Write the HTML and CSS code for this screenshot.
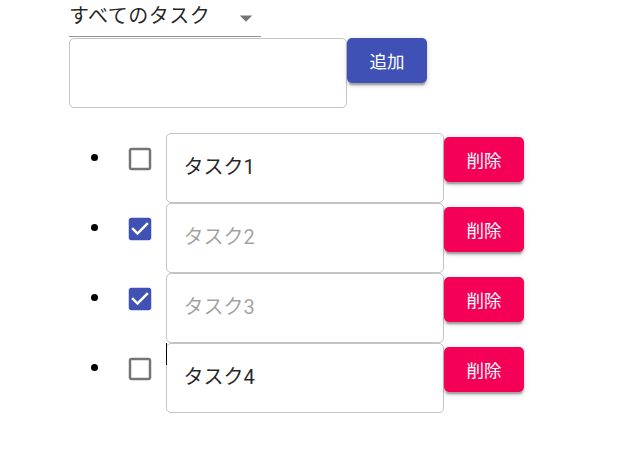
FILE: index.html
```html
<!DOCTYPE html>
<html lang="ja">
<head>
<meta charset="utf-8">
<link rel="stylesheet" href="styles.css">
</head>
<body>
<div class="app">
  <div class="select">
    <span class="select-text">すべてのタスク</span>
    <svg class="select-icon" viewBox="0 0 24 24" width="30" height="30"><path d="M7 10l5 5 5-5z"/></svg>
  </div>
  <div class="add-row">
    <div class="field add-field"></div>
    <button class="btn btn-primary">追加</button>
  </div>
  <ul class="list">
    <li class="item">
      <span class="bullet"></span>
      <span class="check"><svg viewBox="0 0 24 24" width="30" height="30"><path class="off" d="M19 5v14H5V5h14m0-2H5c-1.1 0-2 .9-2 2v14c0 1.1.9 2 2 2h14c1.1 0 2-.9 2-2V5c0-1.1-.9-2-2-2z"/></svg></span>
      <div class="field task"><span class="task-text">タスク1</span></div>
      <button class="btn btn-danger">削除</button>
    </li>
    <li class="item">
      <span class="bullet"></span>
      <span class="check"><svg viewBox="0 0 24 24" width="30" height="30"><rect x="5" y="5" width="14" height="14" fill="#fff"/><path class="on" d="M19 3H5c-1.11 0-2 .9-2 2v14c0 1.1.89 2 2 2h14c1.11 0 2-.9 2-2V5c0-1.1-.89-2-2-2zm-9 14l-5-5 1.41-1.41L10 14.17l7.590-7.59L19 8l-9 9z"/></svg></span>
      <div class="field task"><span class="task-text done">タスク2</span></div>
      <button class="btn btn-danger">削除</button>
    </li>
    <li class="item">
      <span class="bullet"></span>
      <span class="check"><svg viewBox="0 0 24 24" width="30" height="30"><rect x="5" y="5" width="14" height="14" fill="#fff"/><path class="on" d="M19 3H5c-1.11 0-2 .9-2 2v14c0 1.1.89 2 2 2h14c1.11 0 2-.9 2-2V5c0-1.1-.89-2-2-2zm-9 14l-5-5 1.41-1.41L10 14.17l7.590-7.59L19 8l-9 9z"/></svg></span>
      <div class="field task"><span class="task-text done">タスク3</span></div>
      <button class="btn btn-danger">削除</button>
    </li>
    <li class="item">
      <span class="bullet"></span>
      <span class="check"><svg viewBox="0 0 24 24" width="30" height="30"><path class="off" d="M19 5v14H5V5h14m0-2H5c-1.1 0-2 .9-2 2v14c0 1.1.9 2 2 2h14c1.1 0 2-.9 2-2V5c0-1.1-.9-2-2-2z"/></svg></span>
      <div class="field task"><span class="caret"></span><span class="task-text">タスク4</span></div>
      <button class="btn btn-danger">削除</button>
    </li>
  </ul>
</div>
</body>
</html>
```
FILE: styles.css
```css
html, body {
  margin: 0;
  padding: 0;
  background: #fff;
}
body {
  font-family: Roboto, "Noto Sans CJK JP", sans-serif;
  color: rgba(0, 0, 0, 0.87);
}
.app {
  padding-left: 69px;
}
.select {
  position: relative;
  width: 192px;
  height: 37px;
  border-bottom: 1.25px solid rgba(0, 0, 0, 0.42);
  box-sizing: border-box;
  padding-top: 5px;
}
.select-text {
  display: block;
  font-size: 20px;
  line-height: 23px;
  letter-spacing: 0.5px;
}
.select-icon {
  position: absolute;
  right: 0;
  top: 3px;
  fill: rgba(0, 0, 0, 0.54);
}
.add-row {
  display: flex;
  align-items: flex-start;
  margin-top: 1px;
}
.field {
  position: relative;
  width: 278px;
  height: 70px;
  box-sizing: border-box;
  border: 1.25px solid rgba(0, 0, 0, 0.23);
  border-radius: 5px;
  display: flex;
  align-items: center;
  padding-left: 16.5px;
}
.btn {
  width: 80px;
  height: 45px;
  border: none;
  border-radius: 5px;
  color: #fff;
  font-family: Roboto, "Noto Sans CJK JP", sans-serif;
  font-size: 17.5px;
  padding: 0;
  box-shadow: 0 3.75px 1.25px -2.5px rgba(0, 0, 0, 0.2), 0 2.5px 2.5px 0 rgba(0, 0, 0, 0.14), 0 1.25px 6.25px 0 rgba(0, 0, 0, 0.12);
}
.btn-primary {
  background: #3f51b5;
}
.btn-danger {
  background: #f50057;
  margin-top: 4px;
}
.list {
  list-style: none;
  margin: 25px 0 0;
  padding: 0;
}
.item {
  display: flex;
  align-items: flex-start;
  height: 70px;
}
.bullet {
  width: 7px;
  height: 7px;
  border-radius: 50%;
  background: #000;
  margin-left: 22px;
  margin-top: 21px;
}
.check {
  width: 52px;
  height: 52px;
  margin-left: 16px;
  display: flex;
  align-items: center;
  justify-content: center;
}
.check svg {
  display: block;
}
.off {
  fill: rgba(0, 0, 0, 0.54);
}
.on {
  fill: #3f51b5;
}
.task-text {
  font-size: 20px;
  line-height: 24px;
  margin-top: -3px;
}
.done {
  color: rgba(0, 0, 0, 0.38);
}
.caret {
  position: absolute;
  left: -1px;
  top: -1px;
  width: 1px;
  height: 22px;
  background: #000;
}
```
